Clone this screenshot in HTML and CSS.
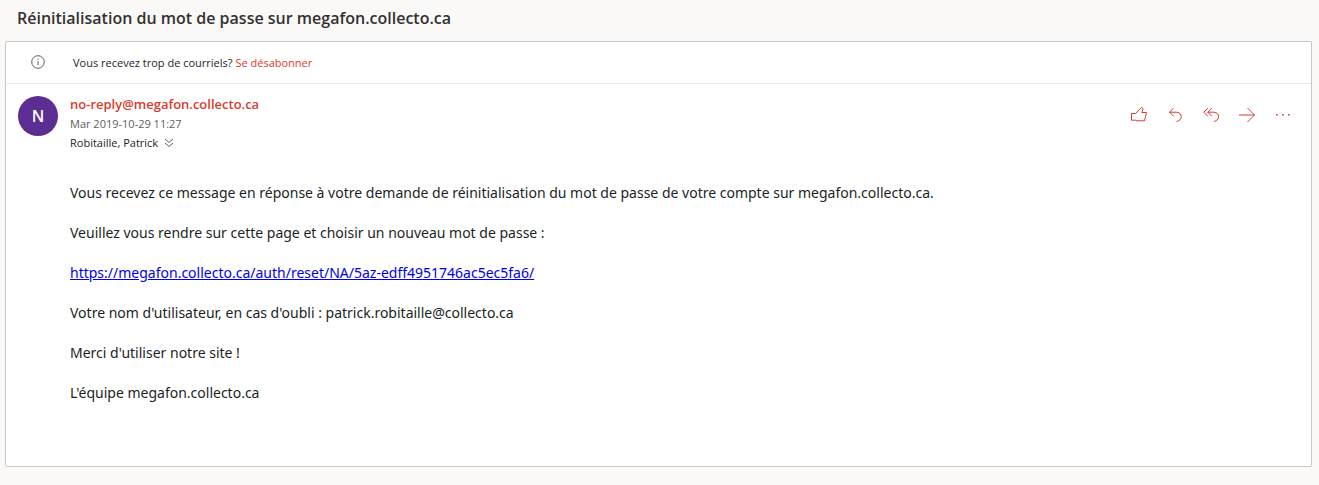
FILE: index.html
```html
<!DOCTYPE html>
<html lang="fr">
<head>
<meta charset="utf-8">
<meta name="viewport" content="width=device-width, initial-scale=1">
<title>Réinitialisation du mot de passe</title>
<link rel="stylesheet" href="styles.css">
</head>
<body>
<main class="reader">
  <h1 class="subject">Réinitialisation du mot de passe sur megafon.collecto.ca</h1>
  <article class="message">
    <div class="notice">
      <svg class="notice-icon" viewBox="0 0 14 14" aria-hidden="true"><circle cx="7" cy="7" r="6.3"/><path d="M7 6v4.2M7 3.6v1.2"/></svg>
      <p class="notice-text">Vous recevez trop de courriels? <a class="unsubscribe" href="#">Se désabonner</a></p>
    </div>
    <header class="message-header">
      <div class="avatar">N</div>
      <div class="sender">
        <a class="sender-name" href="#">no-reply@megafon.collecto.ca</a>
        <time class="date" datetime="2019-10-29T11:27">Mar 2019-10-29 11:27</time>
        <div class="recipients">Robitaille, Patrick
          <button class="expand" type="button" aria-label="Détails"><svg viewBox="0 0 10 10"><path d="M1 1l4 3.5L9 1M1 5l4 3.5L9 5"/></svg></button>
        </div>
      </div>
      <div class="actions">
        <button class="action" type="button" aria-label="J'aime"><svg viewBox="0 0 18 18"><path d="M1.5 7.5H5.5L10.7 2.2Q11.5 1.2 12.5 1.8Q13.2 2.4 12.8 3.6L11.8 6.5H16.5L14.5 14.8H7L5.5 14.2H1.5Z"/></svg></button>
        <button class="action" type="button" aria-label="Répondre"><svg viewBox="0 0 18 18"><path d="M7.5 2.2L3.5 6.2L7.5 10.2M3.5 6.2H10.2C13.8 6.2 15.3 8.3 15.3 10.5C15.3 13 13.5 15 10.5 15.5"/></svg></button>
        <button class="action" type="button" aria-label="Répondre à tous"><svg viewBox="0 0 18 18"><path d="M5.8 2.2L1.8 6.2L5.8 10.2M9.8 2.2L5.8 6.2L9.8 10.2M5.8 6.2H11.7C15.1 6.2 16.5 8.3 16.5 10.5C16.5 13 14.7 15 12 15.5"/></svg></button>
        <button class="action" type="button" aria-label="Transférer"><svg viewBox="0 0 18 18"><path d="M1 9H16.5M9.5 2L16.5 9L9.5 16"/></svg></button>
        <button class="action" type="button" aria-label="Autres actions"><svg class="dots" viewBox="0 0 18 18"><path d="M2 8h1.6v1.6H2zM8 8h1.6v1.6H8zM14 8h1.6v1.6H14z"/></svg></button>
      </div>
    </header>
    <div class="body">
      <p>Vous recevez ce message en réponse à votre demande de réinitialisation du mot de passe de votre compte sur megafon.collecto.ca.</p>
      <p>Veuillez vous rendre sur cette page et choisir un nouveau mot de passe :</p>
      <p><a class="reset-link" href="#">https://megafon.collecto.ca/auth/reset/NA/5az-edff4951746ac5ec5fa6/</a></p>
      <p>Votre nom d'utilisateur, en cas d'oubli : patrick.robitaille@collecto.ca</p>
      <p>Merci d'utiliser notre site !</p>
      <p>L'équipe megafon.collecto.ca</p>
    </div>
  </article>
</main>
</body>
</html>
```
FILE: styles.css
```css
* {
  box-sizing: border-box;
}

body {
  margin: 0;
  background: #faf9f8;
  color: #201f1e;
  font-family: "Segoe UI", "Open Sans", "Noto Sans", sans-serif;
}

p {
  margin: 0;
}

a {
  color: #d83b2d;
  text-decoration: none;
}

button {
  display: flex;
  padding: 0;
  border: 0;
  background: none;
  cursor: pointer;
}

svg {
  display: block;
  fill: none;
  stroke: currentColor;
}

.reader {
  padding: 0 7px 18px 5px;
}

.subject {
  margin: 0;
  padding: 6px 12px 11px;
  color: #323130;
  font-size: 16px;
  font-weight: 600;
  line-height: 24px;
}

.message {
  padding-bottom: 63px;
  border: 1px solid #c8c8c8;
  border-radius: 2px;
  background: #fff;
}

.notice {
  display: flex;
  align-items: center;
  gap: 28px;
  height: 42px;
  padding: 0 25px;
  border-bottom: 1px solid #eaeaea;
}

.notice-icon {
  width: 14px;
  height: 14px;
  margin-bottom: 2px;
  color: #605e5c;
}

.notice-text {
  font-size: 11px;
  line-height: 16px;
}

.message-header {
  display: flex;
  gap: 12px;
  padding: 11px 16px 0 12px;
}

.avatar {
  width: 40px;
  height: 40px;
  margin-top: 1px;
  border-radius: 50%;
  background: #5c2e91;
  color: #fff;
  font-size: 16px;
  font-weight: 600;
  line-height: 40px;
  text-align: center;
}

.sender {
  display: flex;
  flex: 1;
  flex-direction: column;
  align-items: flex-start;
  font-size: 11px;
  line-height: 19px;
}

.sender-name {
  font-size: 13px;
  font-weight: 600;
}

.date {
  color: #605e5c;
}

.recipients {
  display: flex;
  align-items: center;
  gap: 6px;
}

.expand {
  width: 10px;
  height: 10px;
  color: #605e5c;
}

.expand svg {
  width: 10px;
  height: 10px;
}

.actions {
  display: flex;
  gap: 18px;
  padding: 11px 3px 0 0;
}

.action {
  height: 18px;
  color: #d83b2d;
}

.action svg {
  width: 18px;
  height: 18px;
}

.action .dots {
  fill: currentColor;
  stroke: none;
}

.body {
  display: flex;
  flex-direction: column;
  gap: 20px;
  padding: 31px 64px 0;
  font-family: "Segoe UI", "Noto Sans", "Open Sans", sans-serif;
  font-size: 14px;
  line-height: 20px;
}

.reset-link {
  color: #00e;
  text-decoration: underline;
}
```
